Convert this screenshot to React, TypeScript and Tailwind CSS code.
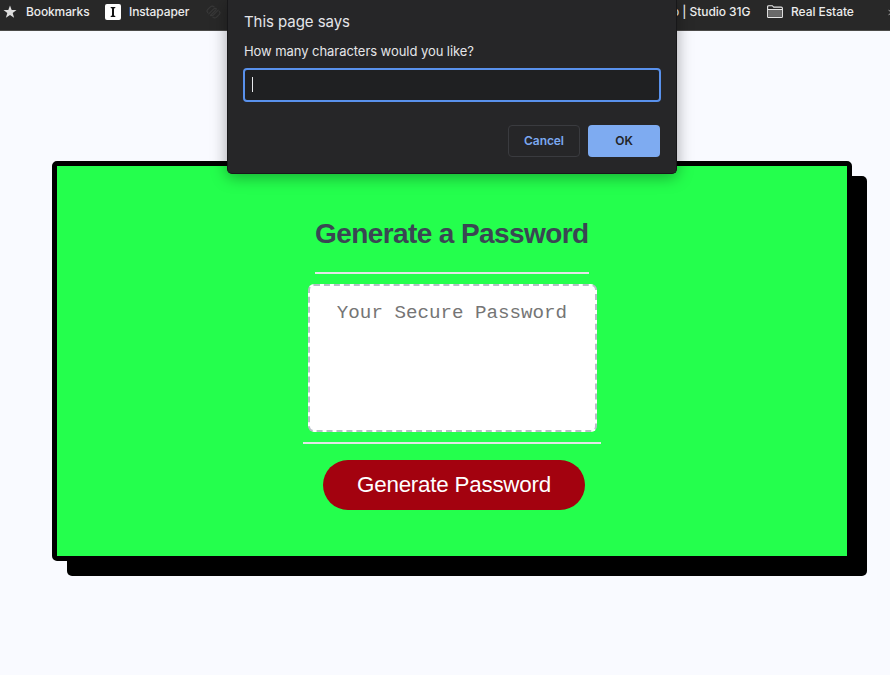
import React from "react";

function BookmarksBar() {
  return (
    <nav className="flex h-[31px] items-start overflow-hidden border-b border-[#4b4a49] bg-[#282828] font-['Inter',sans-serif] text-[12px] font-medium leading-6 tracking-[-0.12px] whitespace-nowrap text-[#ececec]">
      <svg className="mt-[5px] ml-[3px] size-[14px] shrink-0" viewBox="0 0 14 14" fill="#dedede">
        <path d="M7 .5 8.7 5h4.8L9.7 8l1.4 4.8L7 10 2.9 12.8 4.3 8 .5 5h4.8z" />
      </svg>
      <span className="ml-[9px] w-[79px]">Bookmarks</span>
      <span className="mt-1 flex size-4 shrink-0 items-center justify-center rounded-[2px] bg-white">
        <svg className="size-4" viewBox="0 0 16 16" fill="#111">
          <path d="M5.7 3h4.6v1L9 4.4v7.2l1.3.4v1H5.7v-1l1.3-.4V4.4L5.7 4z" />
        </svg>
      </span>
      <span className="ml-2 w-[76px]">Instapaper</span>
      <svg className="mt-[5px] h-[14px] w-[17px] shrink-0" viewBox="0 0 17 14" fill="none" stroke="#383838" strokeWidth="1.2" strokeLinecap="round">
        <path d="m3.8 8.9 5-5a1.9 1.9 0 0 1 2.7 0M2.6 7.5a2 2 0 0 1 0-2.8l2.8-2.8a2.6 2.6 0 0 1 3.7 0M5.4 10.5l5.5-5.5M13.2 5.1l-5 5a1.9 1.9 0 0 1-2.7 0M14.4 6.5a2 2 0 0 1 0 2.8l-2.8 2.8a2.6 2.6 0 0 1-3.7 0" />
      </svg>
      <span className="ml-auto w-[95px] tracking-[-0.06px]">o | Studio 31G</span>
      <svg className="mt-[5px] h-[14px] w-4 shrink-0" viewBox="0 0 16 14" fill="none">
        <path d="M.6 1.9q0-1.2 1.2-1.2h3.5l1.4 1.4h7.5q1.2 0 1.2 1.2v8.4q0 .8-.8.8H1.4q-.8 0-.8-.8z" stroke="#e6e6e6" strokeWidth="1.1" />
        <path d="M1.2 5h13.6v6.9H1.2z" fill="#696969" />
        <path d="M1 4.5h14" stroke="#e6e6e6" />
      </svg>
      <span className="ml-2 w-[97px] tracking-[-0.06px]">Real Estate</span>
      <svg className="mt-[9px] h-[7px] w-[2px] shrink-0" viewBox="0 0 2 7" fill="none">
        <path d="m.5.8 2.7 2.7L.5 6.2" stroke="#aaa" />
      </svg>
    </nav>
  );
}

function PromptDialog() {
  return (
    <div role="dialog" className="absolute top-0 left-[227px] h-[174px] w-[450px] rounded-b-[5px] border border-t-0 border-[#171719] bg-[#262628] pr-4 pl-[15px] font-['Inter',sans-serif] whitespace-nowrap text-[#e4e5e8] shadow-[0_3px_16px_rgba(0,0,0,0.35)]">
      <h2 className="mt-3 ml-px text-[15px] leading-5 tracking-[-0.06px]">This page says</h2>
      <p className="mt-[9px] ml-px text-[13px] leading-5 tracking-[-0.06px]">How many characters would you like?</p>
      <div className="mt-[7px] flex h-[34px] w-[418px] items-center rounded-[4px] border-2 border-[#5991ec] bg-[#1f2022] pb-px pl-[7px]">
        <span className="h-[15px] w-px bg-[#e8eaed]" />
      </div>
      <div className="mt-[23px] flex w-[417px] justify-end gap-2 text-[12px] font-semibold tracking-[-0.08px]">
        <button className="h-8 w-[72px] rounded-[4px] border border-[#3a3b3f] text-[#7ba8f0]">Cancel</button>
        <button className="h-8 w-[72px] rounded-[4px] bg-[#7eabf1] text-[#222427]">OK</button>
      </div>
    </div>
  );
}

export default function App() {
  return (
    <div className="relative h-[675px] w-[890px] overflow-hidden bg-[#f9faff]">
      <BookmarksBar />
      <main className="mt-[130px] ml-[52px] flex h-[400px] w-[800px] flex-col items-center rounded-[5px] border-[5px] border-black bg-[#24ff4d] shadow-[15px_15px_0_#000]">
        <div className="mt-[47px] h-[61px] w-[274px] border-b-2 border-[#e4e6e8] pt-px font-['Liberation_Sans',Arial,sans-serif] text-[28px] leading-[40px] font-bold tracking-[-0.59px] whitespace-nowrap">
          <h1 className="text-[#3a4653]">Generate a Password</h1>
        </div>
        <div className="mt-[10px] h-[148px] w-[289px] rounded-[6px] border-2 border-dashed border-[#b7bec7] bg-white pt-[15px] text-center font-['Liberation_Mono',monospace] text-[19.2px] leading-6 text-[#757575]">
          Your Secure Password
        </div>
        <div className="mt-[10px] h-[2px] w-[298px] bg-[#e4e6e8]" />
        <button className="mt-4 ml-[4px] h-[50px] w-[262px] rounded-full bg-[#a3020f] font-['Liberation_Sans',Arial,sans-serif] text-[22.4px] tracking-[-0.23px] whitespace-nowrap text-white">
          Generate Password
        </button>
      </main>
      <PromptDialog />
    </div>
  );
}
